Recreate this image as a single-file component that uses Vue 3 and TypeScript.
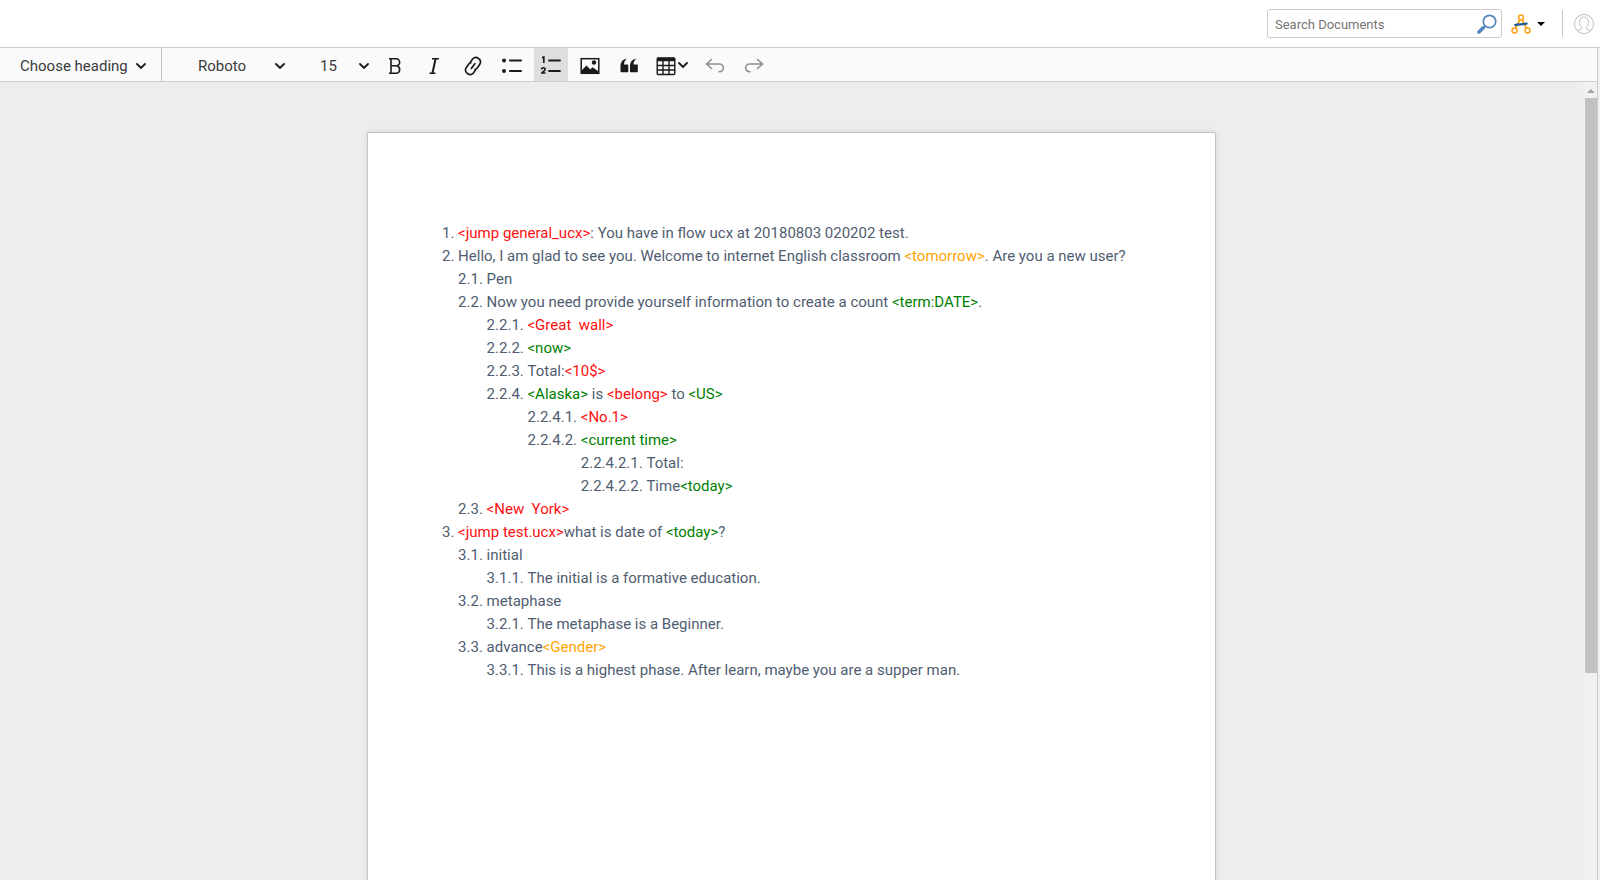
<script setup lang="ts">
import { ref } from 'vue'

const query = ref('')
const heading = ref('Choose heading')
const family = ref('Roboto')
const size = ref('15')
const headings: string[] = ['Choose heading', 'Paragraph', 'Heading 1', 'Heading 2']
const families: string[] = ['Roboto', 'Lato', 'Open Sans']
const sizes: string[] = ['12', '15', '18', '24']
</script>

<template>
  <div class="app">
    <header class="header">
      <form class="search" role="search" @submit.prevent>
        <input v-model="query" type="text" placeholder="Search Documents" aria-label="Search Documents" />
        <button type="submit" aria-label="Search">
          <svg width="20" height="20" viewBox="0 0 20 20" fill="none" stroke="#4f86bd">
            <circle cx="12.5" cy="7.5" r="6.2" stroke-width="1.7" />
            <path d="M8 12 6 14" stroke-width="2" />
            <path d="M6.2 13.8 2 18" stroke-width="3.6" stroke-linecap="round" />
          </svg>
        </button>
      </form>
      <button class="network" type="button" aria-label="Workspace">
        <svg width="20" height="20" viewBox="0 0 20 20" fill="none">
          <path d="M9 5.500 4.500 14.200M11 5.500 15.500 14.200" stroke="#ffa116" stroke-width="1.800" />
          <circle cx="10" cy="3.300" r="2.400" stroke="#ffa116" stroke-width="1.500" />
          <circle cx="3.500" cy="16.500" r="2.500" stroke="#ffa116" stroke-width="1.500" />
          <circle cx="16.500" cy="16.500" r="2.500" stroke="#ffa116" stroke-width="1.500" />
          <path d="M3.500 11.500C7 9.500 11 11.500 16.500 9.200" stroke="#17599c" stroke-width="2.200" />
        </svg>
        <svg class="caret" width="8" height="4" viewBox="0 0 8 4"><path d="M0 0h8L4 4z" fill="#000" /></svg>
      </button>
      <div class="account">
        <button type="button" aria-label="Account">
          <svg width="20" height="20" viewBox="0 0 20 20" fill="none" stroke="#bdbdbd" stroke-width="1">
            <circle cx="10" cy="10" r="9.500" />
            <path d="M3.500 16.700c1-1.200 4.500-1 4.500-2.200 0-1.300-2.500-2.500-2.500-6C5.500 5 7.300 3 10 3s4.500 2 4.500 5.500c0 3.500-2.500 4.700-2.500 6 0 1.200 3.500 1 4.500 2.200" />
          </svg>
        </button>
      </div>
    </header>

    <main class="workspace">
      <section class="editor">
        <div class="toolbar" role="toolbar" aria-label="Formatting">
          <div class="pick heading">
            <select v-model="heading" aria-label="Heading">
              <option v-for="h in headings" :key="h">{{ h }}</option>
            </select>
            <svg class="chevron" width="10" height="7" viewBox="0 0 10 7"><path d="m1 1 4 4 4-4" /></svg>
          </div>
          <div class="pick family">
            <select v-model="family" aria-label="Font family">
              <option v-for="f in families" :key="f">{{ f }}</option>
            </select>
            <svg class="chevron" width="10" height="7" viewBox="0 0 10 7"><path d="m1 1 4 4 4-4" /></svg>
          </div>
          <div class="pick size">
            <select v-model="size" aria-label="Font size">
              <option v-for="s in sizes" :key="s">{{ s }}</option>
            </select>
            <svg class="chevron" width="10" height="7" viewBox="0 0 10 7"><path d="m1 1 4 4 4-4" /></svg>
          </div>
          <div class="tools">
            <button type="button" aria-label="Bold">
              <svg width="20" height="20" viewBox="0 0 20 20" fill="none" stroke="#1a1a1a" stroke-width="1.600">
                <path d="M4 2.800h7.200a3.400 3.400 0 0 1 0 6.900H6.500M11.500 9.700a3.800 3.800 0 0 1 0 7.500H4M6 2.800v14.400" />
              </svg>
            </button>
            <button type="button" aria-label="Italic">
              <svg width="20" height="20" viewBox="0 0 20 20" fill="none" stroke="#1a1a1a" stroke-width="1.600">
                <path d="M8 2.800h7M5.500 17.200h6" /><path d="M11.500 3 8.500 17" stroke-width="2" />
              </svg>
            </button>
            <button type="button" aria-label="Link">
              <svg width="20" height="20" viewBox="0 0 20 20" fill="none" stroke="#1a1a1a" stroke-width="1.700" stroke-linecap="round">
                <path d="M7.800 5.500 9.600 3a4.500 4.500 0 0 1 7.200 5.300l-2.600 3.600c-.6.800-1.200 1.200-2 1.500M12.200 14.500l-1.800 2.500a4.500 4.500 0 0 1-7.200-5.300l2.600-3.600c.6-.8 1.200-1.200 2-1.500M11.800 7.700l-3.500 4.700" />
              </svg>
            </button>
            <button type="button" aria-label="Bulleted list">
              <svg width="20" height="20" viewBox="0 0 20 20" fill="#1a1a1a">
                <circle cx="2" cy="4.500" r="2" /><circle cx="2" cy="15" r="2" />
                <rect x="7" y="3.500" width="13" height="2" rx="1" /><rect x="7" y="14" width="13" height="2" rx="1" />
              </svg>
            </button>
            <button type="button" class="on" aria-label="Numbered list" aria-pressed="true">
              <svg width="20" height="20" viewBox="0 0 20 20" fill="none" stroke="#1a1a1a">
                <path d="M1 1.700 2.800 1V7" stroke-width="1.700" />
                <path d="M.6 13.400c0-2.300 3.700-2.300 3.500 0 0 1.300-2.200 2.300-3.200 3.600h3.700" stroke-width="1.600" />
                <path d="M8 4.500h11M8 15h11" stroke-width="1.800" stroke-linecap="round" />
              </svg>
            </button>
            <button type="button" aria-label="Insert image">
              <svg width="20" height="20" viewBox="0 0 20 20">
                <rect x="1.200" y="2.700" width="17.600" height="14.600" fill="none" stroke="#1a1a1a" stroke-width="1.500" />
                <path d="M2 14 6.500 9.500l3.800 4 2.300-2.300L18 15v2.500H2z" fill="#1a1a1a" /><circle cx="14" cy="6.500" r="2.200" fill="#1a1a1a" />
              </svg>
            </button>
            <button type="button" aria-label="Block quote">
              <svg width="20" height="20" viewBox="0 0 20 20" fill="#1a1a1a">
                <path d="M1.500 10.500C1.500 6 3.500 3 8 2.700 6 4 5 6 5 8.500h3.500a.8.800 0 0 1 .8.800v6.200a.8.800 0 0 1-.8.800H2.300a.8.800 0 0 1-.8-.8zM11 10.500c0-4.500 2-7.500 6.500-7.800-2 1.300-3 3.300-3 5.800H18a.8.800 0 0 1 .8.800v6.200a.8.800 0 0 1-.8.800h-6.200a.8.800 0 0 1-.8-.8z" />
              </svg>
            </button>
            <button type="button" class="wide" aria-label="Insert table">
              <svg width="20" height="20" viewBox="0 0 20 20" fill="none" stroke="#1a1a1a" stroke-width="1.400">
                <rect x="1.200" y="2" width="17.600" height="16.500" rx="1" /><path d="M1 9.500h18M1 14h18M7 5v13M13 5v13" />
                <path d="M1 3.500h18" stroke-width="3.500" />
              </svg>
              <svg class="chevron" width="10" height="7" viewBox="0 0 10 7"><path d="m1 1 4 4 4-4" /></svg>
            </button>
            <button type="button" disabled aria-label="Undo">
              <svg width="20" height="20" viewBox="0 0 20 20" fill="none" stroke="#8f8f8f" stroke-width="1.600" stroke-linecap="round">
                <path d="M6.500 3.500 1.500 8l5 4.500M2 8h12.500a3.800 3.800 0 0 1 0 7.700H14" />
              </svg>
            </button>
            <button type="button" disabled aria-label="Redo">
              <svg width="20" height="20" viewBox="0 0 20 20" fill="none" stroke="#8f8f8f" stroke-width="1.600" stroke-linecap="round">
                <path d="m13.500 3.500 5 4.500-5 4.500M18 8H5.500a3.800 3.800 0 0 0 0 7.700H6" />
              </svg>
            </button>
          </div>
        </div>

        <div class="canvas">
          <div class="scroller">
            <article class="page">
              <ol>
                <li><span class="n">1. </span><div><p><b class="r">&lt;jump general_ucx&gt;</b>: You have in flow ucx at 20180803 020202 test.</p></div></li>
                <li><span class="n">2. </span><div>
                  <p>Hello, I am glad to see you. Welcome to internet English classroom <b class="o">&lt;tomorrow&gt;</b>. Are you a new user?</p>
                  <ol>
                    <li><span class="n">2.1. </span><div><p>Pen</p></div></li>
                    <li><span class="n">2.2. </span><div>
                      <p>Now you need provide yourself information to create a count <b class="g">&lt;term:DATE&gt;</b>.</p>
                      <ol>
                        <li><span class="n">2.2.1. </span><div><p><b class="r">&lt;Great&nbsp; wall&gt;</b></p></div></li>
                        <li><span class="n">2.2.2. </span><div><p><b class="g">&lt;now&gt;</b></p></div></li>
                        <li><span class="n">2.2.3. </span><div><p>Total:<b class="r">&lt;10$&gt;</b></p></div></li>
                        <li><span class="n">2.2.4. </span><div>
                          <p><b class="g">&lt;Alaska&gt;</b> is <b class="r">&lt;belong&gt;</b> to <b class="g">&lt;US&gt;</b></p>
                          <ol>
                            <li><span class="n">2.2.4.1. </span><div><p><b class="r">&lt;No.1&gt;</b></p></div></li>
                            <li><span class="n">2.2.4.2. </span><div>
                              <p><b class="g">&lt;current time&gt;</b></p>
                              <ol>
                                <li><span class="n">2.2.4.2.1. </span><div><p>Total:</p></div></li>
                                <li><span class="n">2.2.4.2.2. </span><div><p>Time<b class="g">&lt;today&gt;</b></p></div></li>
                              </ol>
                            </div></li>
                          </ol>
                        </div></li>
                      </ol>
                    </div></li>
                    <li><span class="n">2.3. </span><div><p><b class="r">&lt;New&nbsp; York&gt;</b></p></div></li>
                  </ol>
                </div></li>
                <li><span class="n">3. </span><div>
                  <p><b class="r">&lt;jump test.ucx&gt;</b>what is date of <b class="g">&lt;today&gt;</b>?</p>
                  <ol>
                    <li><span class="n">3.1. </span><div>
                      <p>initial</p>
                      <ol><li><span class="n">3.1.1. </span><div><p>The initial is a formative education.</p></div></li></ol>
                    </div></li>
                    <li><span class="n">3.2. </span><div>
                      <p>metaphase</p>
                      <ol><li><span class="n">3.2.1. </span><div><p>The metaphase is a Beginner.</p></div></li></ol>
                    </div></li>
                    <li><span class="n">3.3. </span><div>
                      <p>advance<b class="o">&lt;Gender&gt;</b></p>
                      <ol><li><span class="n">3.3.1. </span><div><p>This is a highest phase. After learn, maybe you are a supper man.</p></div></li></ol>
                    </div></li>
                  </ol>
                </div></li>
              </ol>
            </article>
          </div>
          <div class="track" aria-hidden="true">
            <svg width="8" height="4" viewBox="0 0 8 4"><path d="M4 0 8 4H0z" fill="#a3a3a3" /></svg>
            <div class="thumb"></div>
          </div>
        </div>
      </section>
    </main>
  </div>
</template>

<style>
body {
  margin: 0;
}
</style>

<style scoped>
.app {
  display: flex;
  flex-direction: column;
  height: 100vh;
  overflow: hidden;
  background: #fff;
  font-family: Roboto, sans-serif;
  font-size: 15px;
  color: #505d70;
}
button,
input,
select {
  font: inherit;
  color: inherit;
  border: 0;
  padding: 0;
  margin: 0;
  background: none;
}
button {
  display: flex;
  align-items: center;
  justify-content: center;
}
svg {
  display: block;
  flex: none;
}
.header {
  display: flex;
  align-items: center;
  justify-content: flex-end;
  flex: none;
  height: 47px;
  padding-right: 6px;
}
.search {
  display: flex;
  align-items: center;
  box-sizing: border-box;
  width: 235px;
  height: 29px;
  padding: 0 4px 0 7px;
  border: 1px solid #ccc;
  border-radius: 3px;
}
.search input {
  flex: 1;
  min-width: 0;
  padding-top: 2px;
  font-size: 13px;
  color: #333;
  outline: none;
}
.search input::placeholder {
  color: #757575;
  opacity: 1;
}
.network {
  gap: 6px;
  margin: 0 17px 0 9px;
}
.account {
  display: flex;
  align-items: center;
  height: 27px;
  padding-left: 11px;
  border-left: 1px solid #c8c8c8;
}
.workspace {
  display: flex;
  flex: 1;
  min-height: 0;
  padding-right: 2px;
  border-top: 1px solid #ccc;
  background: #f0f0f0;
}
.editor {
  display: flex;
  flex: 1;
  flex-direction: column;
  min-width: 0;
  border-right: 1px solid #ccc;
}
.toolbar {
  display: flex;
  flex: none;
  height: 33px;
  border-bottom: 1px solid #ccc;
  background: #fafafa;
}
.pick {
  position: relative;
  display: flex;
  align-items: center;
  box-sizing: border-box;
  color: #3c3c3c;
}
.pick select {
  appearance: none;
  width: 100%;
  height: 100%;
  padding-top: 2px;
  outline: none;
}
.pick .chevron {
  position: absolute;
  top: 15px;
  right: 15px;
  pointer-events: none;
}
.heading {
  width: 162px;
  padding-left: 20px;
  border-right: 1px solid #c4c4c4;
}
.family {
  width: 138px;
  padding-left: 36px;
}
.size {
  width: 84px;
  padding-left: 20px;
}
.chevron path {
  fill: none;
  stroke: #1a1a1a;
  stroke-width: 1.8;
  stroke-linecap: round;
}
.tools {
  display: flex;
  gap: 5px;
  margin-left: -6px;
}
.tools button {
  width: 34px;
  height: 33px;
  padding-top: 2px;
}
.tools .on {
  background: #dedede;
}
.tools .wide {
  width: 42px;
  gap: 2px;
}
.canvas {
  display: flex;
  flex: 1;
  min-height: 0;
  background: #ededed;
}
.scroller {
  flex: 1;
  min-width: 0;
  overflow: hidden;
}
.page {
  box-sizing: border-box;
  max-width: 849px;
  min-height: 1000px;
  margin: 50px auto 0;
  padding: 89px 74px;
  border: 1px solid #c4c4c4;
  border-radius: 2px;
  background: #fff;
  box-shadow: 0 0 6px rgba(0, 0, 0, 0.1);
  line-height: 23px;
}
ol {
  margin: 0;
  padding: 0;
  list-style: none;
}
li {
  display: flex;
}
li > div {
  flex: 1;
  min-width: 0;
}
p {
  margin: 0;
}
.n {
  flex: none;
  white-space: pre;
}
b {
  font-weight: 400;
}
.r {
  color: #ff1010;
}
.g {
  color: #008000;
}
.o {
  color: #ffa500;
}
.track {
  display: flex;
  flex: none;
  flex-direction: column;
  align-items: center;
  box-sizing: border-box;
  width: 14px;
  padding-left: 2px;
  background: #f1f1f1;
}
.track svg {
  margin: 7px 0 5px;
}
.thumb {
  width: 12px;
  height: 72%;
  background: #c1c1c1;
}
</style>
